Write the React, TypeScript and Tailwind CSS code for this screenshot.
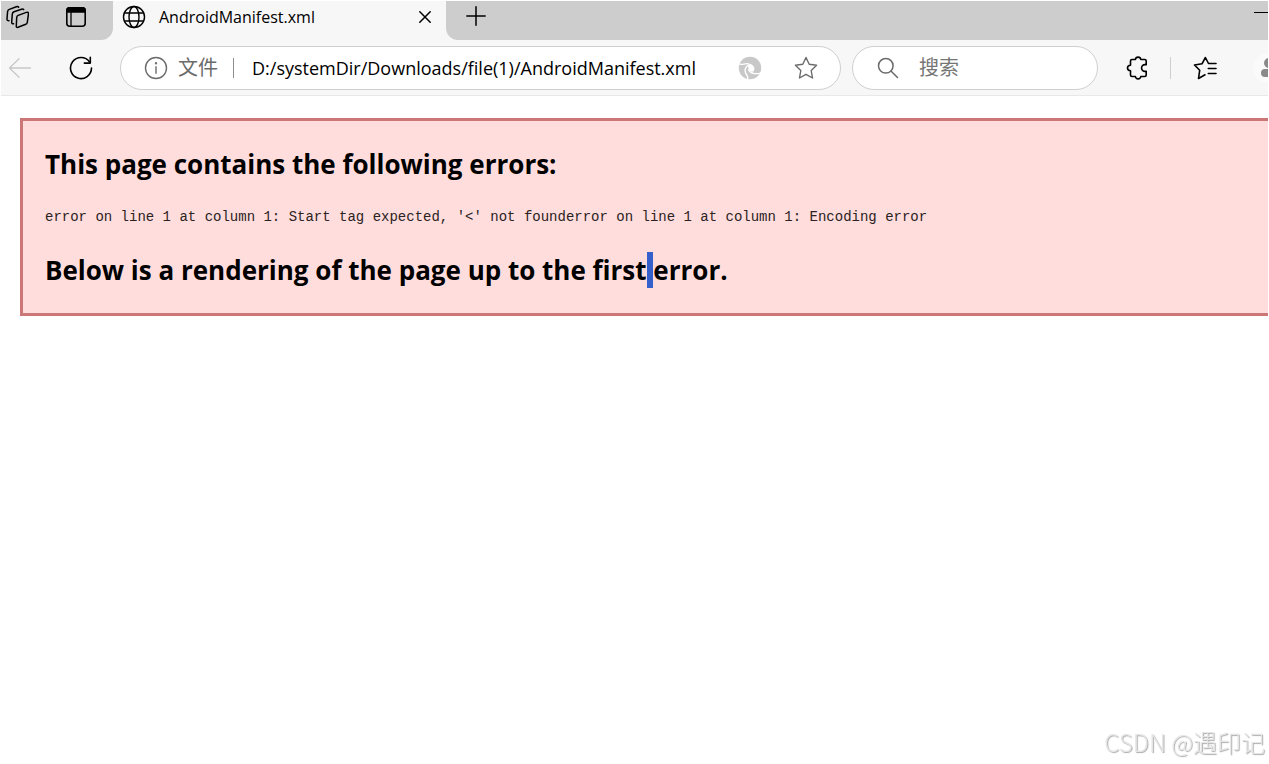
import React, { useState } from 'react';

const iconProps = {
  fill: 'none',
  stroke: 'currentColor',
  strokeLinecap: 'round' as const,
  strokeLinejoin: 'round' as const,
  'aria-hidden': true,
};

const WorkspacesIcon = () => (
  <svg width="24" height="24" viewBox="0 0 24 24" strokeWidth="1.5" {...iconProps}>
    <path d="M13.200 10.400 21.300 7.400q2.200-.6 2.200 1.300l-1.200 8.600q-.3 1.400-1.500 2L13 22.300q-1.900.5-1.700-1.300l.4-8.500q.1-1.600 1.500-2.100z" />
    <path d="M8.600 18.800Q6.600 19 6.700 17l.6-8q.2-1.700 1.700-2.300l7.500-2.500q1.600-.5 2.200.5" />
    <path d="M4 15.800Q1.800 15.800 2 13.800l.6-7.300q.2-1.500 1.700-2.100L11.300 1.700q1.700-.5 2.400.5" />
  </svg>
);

const TabActionsIcon = () => (
  <svg width="22" height="22" viewBox="0 0 22 22" strokeWidth="1.600" {...iconProps}>
    <rect x="1.800" y="1.800" width="18.400" height="18.400" rx="3" />
    <path d="M1.800 6V4.500q0-2.700 2.700-2.700h13q2.700 0 2.700 2.700V6z" fill="currentColor" />
    <path d="M6 6v14" strokeWidth="1.300" />
  </svg>
);

const GlobeIcon = () => (
  <svg width="24" height="24" viewBox="0 0 24 24" strokeWidth="1.400" {...iconProps}>
    <circle cx="12" cy="12" r="10.500" />
    <ellipse cx="12" cy="12" rx="5" ry="10.500" />
    <path d="M2.500 8h19M2.500 16h19" />
  </svg>
);

const CloseIcon = () => (
  <svg width="12" height="12" viewBox="0 0 12 12" strokeWidth="1.500" {...iconProps}>
    <path d="m.8.8 10.400 10.400M11.200.8.8 11.200" />
  </svg>
);

const PlusIcon = () => (
  <svg width="20" height="20" viewBox="0 0 20 20" strokeWidth="1.500" {...iconProps}>
    <path d="M10 .8v18.400M.8 10h18.400" />
  </svg>
);

const BackIcon = () => (
  <svg width="24" height="24" viewBox="0 0 24 24" strokeWidth="1.300" {...iconProps}>
    <path d="M22.500 12H1.500M11 2.700 1.500 12l9.500 9.300" />
  </svg>
);

const ReloadIcon = () => (
  <svg width="24" height="24" viewBox="0 0 24 24" strokeWidth="1.600" {...iconProps}>
    <path d="M22.500 12A10.500 10.500 0 1 1 20.600 6" />
    <path d="M21.300 1.200v5.900h-6" />
  </svg>
);

const InfoIcon = () => (
  <svg width="24" height="24" viewBox="0 0 24 24" strokeWidth="1.400" {...iconProps}>
    <circle cx="12" cy="12" r="10.500" />
    <path d="M12 10.800v6.400" />
    <circle cx="12" cy="7.300" r=".5" fill="currentColor" />
  </svg>
);

const SwirlIcon = () => (
  <svg width="24" height="24" viewBox="0 0 24 24" aria-hidden>
    <circle cx="12" cy="12" r="11.200" fill="currentColor" />
    <g fill="none" stroke="#fff" strokeWidth="1.300">
      <path d="M0 7.500C3.500 9.800 6 7.200 10 7.800c2 .3 4 1.200 5 2.700" />
      <path d="M10.500 9C6.500 11.500 6.200 15.500 8.500 18.500c1.300 1.700 1.500 3.500 1 5.500" />
      <path d="M10.500 13c1.200 4.500 7 6 13.500 3.500" />
    </g>
    <path d="M10 9.200c2.500-.9 5-.2 6 1.800.8 1.600.4 3.400-.8 4.700-2.200-.2-3.900-1.300-4.500-3-.3-1.200-.8-2.200-.7-3.500z" fill="#fff" />
  </svg>
);

const StarIcon = () => (
  <svg width="24" height="24" viewBox="0 0 24 24" strokeWidth="1.400" {...iconProps}>
    <path d="m12 1.500 3.200 6.800 7.400 1-5.400 5.200 1.300 7.500-6.500-3.700L5.500 22l1.300-7.500-5.400-5.200 7.400-1z" />
  </svg>
);

const SearchIcon = () => (
  <svg width="22" height="22" viewBox="0 0 22 22" strokeWidth="1.500" {...iconProps}>
    <circle cx="8.800" cy="8.800" r="7.300" />
    <path d="m14.200 14.200 6.300 6.300" />
  </svg>
);

const ExtensionsIcon = () => (
  <svg width="22" height="24" viewBox="0 0 22 24" strokeWidth="1.600" {...iconProps}>
    <path d="M20.200 8.800V5q0-1.500-1.500-1.500h-3.900c-.4-3.200-5-3.200-5.400 0H6q-1.500 0-1.500 1.500v4.300c-4 .2-4 5.200 0 5.400V19q0 1.500 1.500 1.500h3.400c.4 3.200 5 3.200 5.400 0h3.900q1.500 0 1.500-1.500v-3.800c-6.200 1.300-6.200-7.700 0-6.400z" />
  </svg>
);

const FavoritesIcon = () => (
  <svg width="24" height="24" viewBox="0 0 24 24" strokeWidth="1.600" {...iconProps}>
    <path d="M23 7.500h-7.500L12.400 1.500 9 7.800 1.500 9l5.200 5.300-1.200 8.200 6.500-3.700" />
    <path d="M15.300 12.500H23M15.300 17.500H23" />
  </svg>
);

const ProfileIcon = () => (
  <svg width="30" height="30" viewBox="0 0 30 30" className="shrink-0" aria-hidden>
    <circle cx="15" cy="15" r="15" fill="#fafafa" />
    <circle cx="16" cy="10" r="5" fill="#8a8a8a" />
    <rect x="8" y="16" width="18" height="8" rx="4" fill="#8a8a8a" />
  </svg>
);

const TabStrip: React.FC = () => (
  <div className="flex h-[39px] bg-[#f7f7f7] text-black">
    <div className="flex w-28 shrink-0 justify-between rounded-br-xl bg-[#cdcdcd] pl-1 pr-[26px] pt-1">
      <button aria-label="Workspaces" className="h-6">
        <WorkspacesIcon />
      </button>
      <button aria-label="Tab actions" className="h-6">
        <TabActionsIcon />
      </button>
    </div>
    <div className="flex h-8 w-[333px] shrink-0 items-center pl-[9px] pr-[15px]">
      <GlobeIcon />
      <span className="flex-1 pl-[13px] text-base leading-6">AndroidManifest.xml</span>
      <button aria-label="Close tab">
        <CloseIcon />
      </button>
    </div>
    <div className="flex flex-1 items-start justify-between rounded-bl-xl bg-[#cdcdcd] pl-5 pt-[5px]">
      <button aria-label="New tab">
        <PlusIcon />
      </button>
      <button aria-label="Minimize" className="flex h-3 w-[14px] items-center">
        <span className="h-px w-full bg-black" />
      </button>
    </div>
  </div>
);

const Toolbar: React.FC = () => {
  const [url, setUrl] = useState('D:/systemDir/Downloads/file(1)/AndroidManifest.xml');
  const [query, setQuery] = useState('');

  return (
    <div className="flex h-14 items-center overflow-hidden border-b border-[#e8e8e8] bg-[#f7f7f7] pl-[7px] text-black">
      <button aria-label="Back" className="text-[#c8c8c8]">
        <BackIcon />
      </button>
      <button aria-label="Reload" className="ml-[37px]">
        <ReloadIcon />
      </button>

      {/* Address bar */}
      <div className="ml-[27px] flex h-11 min-w-0 flex-1 items-center rounded-full border border-[#cfcfcf] bg-white pl-[23px] pr-[22px] text-[#6b6b6b]">
        <InfoIcon />
        <label htmlFor="url" className="ml-[10px] text-xl leading-6">文件</label>
        <span className="ml-[15px] h-5 w-px shrink-0 bg-[#8f8f8f]" />
        <input
          id="url"
          value={url}
          onChange={(e) => setUrl(e.target.value)}
          className="ml-[18px] min-w-0 flex-1 bg-transparent text-lg leading-6 text-black outline-none"
        />
        <button aria-label="Site assistant" className="text-[#c8c8c8]">
          <SwirlIcon />
        </button>
        <button aria-label="Add to favorites" className="ml-8">
          <StarIcon />
        </button>
      </div>

      {/* Search box */}
      <div className="ml-[11px] flex h-11 w-[246px] shrink-0 items-center rounded-full border border-[#cfcfcf] bg-white pl-6 text-[#6b6b6b]">
        <SearchIcon />
        <input
          aria-label="搜索"
          placeholder="搜索"
          value={query}
          onChange={(e) => setQuery(e.target.value)}
          className="ml-5 w-40 bg-transparent text-xl leading-6 outline-none placeholder:text-[#767676]"
        />
      </div>

      <div className="flex w-[170px] shrink-0 items-center pl-7">
        <button aria-label="Extensions" className="shrink-0">
          <ExtensionsIcon />
        </button>
        <span className="ml-[22px] h-[22px] w-px shrink-0 bg-[#cfcfcf]" />
        <button aria-label="Favorites" className="ml-[22px] shrink-0">
          <FavoritesIcon />
        </button>
        <button aria-label="Profile" className="ml-9 shrink-0">
          <ProfileIcon />
        </button>
      </div>
    </div>
  );
};

const ParserError: React.FC = () => (
  <div className="border-[3px] border-r-0 border-[#cc7777] bg-[#ffdddd] px-[22px] py-[25px] text-black">
    <h3 className="text-[26px] font-bold leading-9">This page contains the following errors:</h3>
    <div className="my-[18px] font-['Liberation_Mono',monospace] text-sm leading-[34px] text-[#2b2222]">
      error on line 1 at column 1: Start tag expected, '&lt;' not founderror on line 1 at column 1: Encoding error
    </div>
    <h3 className="text-[26px] font-bold leading-9">
      Below is a rendering of the page up to the first<span className="bg-[#3560cc]"> </span>error.
    </h3>
  </div>
);

const App: React.FC = () => (
  <div className="min-h-screen bg-white font-['Open_Sans','Noto_Sans_CJK_SC',sans-serif]">
    <header className="overflow-hidden pl-px pr-px pt-px">
      <TabStrip />
      <Toolbar />
    </header>
    <main className="pl-5 pr-px pt-[22px]">
      <ParserError />
    </main>
    <div className="fixed bottom-1 right-1 font-['Noto_Sans_CJK_SC',sans-serif] text-2xl font-light leading-9 text-[#e6e6e6] text-shadow-[1px_1px_1px_#a8a8a8]">
      CSDN @遇印记
    </div>
  </div>
);

export default App;
